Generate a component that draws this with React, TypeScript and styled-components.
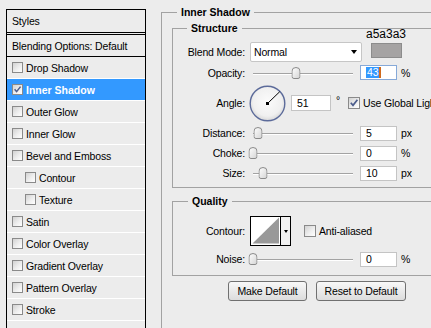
import React from 'react';
import styled, { createGlobalStyle } from 'styled-components';

const GlobalStyle = createGlobalStyle`
  html, body {
    margin: 0;
    padding: 0;
    background: #ececec;
  }
  body {
    font-family: 'Liberation Sans', Arial, sans-serif;
    font-size: 10.5px;
    letter-spacing: -0.15px;
    color: #000;
  }
`;

const Window = styled.div`
  display: flex;
  align-items: flex-start;
  width: 431px;
  height: 328px;
  overflow: hidden;
  background: #ececec;
`;

/* ---------- styles list ---------- */

const StylesPanel = styled.div`
  flex: none;
  width: 138px;
  height: 319px;
  margin: 9px 0 0 6px;
  border: 1px solid #000;
  border-bottom: none;
`;

const PanelHeader = styled.div`
  display: flex;
  align-items: center;
  height: 22px;
  padding-left: 5px;
  border-bottom: 3px double #000;
`;

const BlendingRow = styled.div`
  display: flex;
  align-items: center;
  height: 21px;
  padding-left: 5px;
  border-bottom: 1px solid #000;
  white-space: nowrap;
`;

const StyleRow = styled.div<{ $indent: number; $selected?: boolean }>`
  display: flex;
  align-items: center;
  gap: 3px;
  height: 21px;
  padding-left: ${(p) => 5 + p.$indent * 13}px;
  border-bottom: 1px solid #fff;
  white-space: nowrap;
  background: ${(p) => (p.$selected ? '#3399ff' : 'transparent')};
  color: ${(p) => (p.$selected ? '#fff' : '#000')};
  font-weight: ${(p) => (p.$selected ? 'bold' : 'normal')};
  letter-spacing: ${(p) => (p.$selected ? '0' : '-0.15px')};
`;

const Box = styled.span<{ $size: number }>`
  flex: none;
  display: inline-flex;
  align-items: center;
  justify-content: center;
  box-sizing: border-box;
  width: ${(p) => p.$size}px;
  height: ${(p) => p.$size}px;
  border: 1px solid #8a8a8a;
  background: linear-gradient(135deg, #d2d2d2 0%, #eeeeee 55%, #ffffff 100%);
`;

const CheckBox = ({ size = 11, checked = false }: { size?: number; checked?: boolean }) => (
  <Box $size={size}>
    {checked && (
      <svg width={size - 2} height={size - 2} viewBox="0 0 10 10">
        <path d="M1.8 4.8 L4 7.4 L8.4 1.8" fill="none" stroke="#4c5d8c" strokeWidth="1.7" />
      </svg>
    )}
  </Box>
);

const styleItems = [
  { label: 'Drop Shadow', indent: 0 },
  { label: 'Inner Shadow', indent: 0, checked: true, selected: true },
  { label: 'Outer Glow', indent: 0 },
  { label: 'Inner Glow', indent: 0 },
  { label: 'Bevel and Emboss', indent: 0 },
  { label: 'Contour', indent: 1 },
  { label: 'Texture', indent: 1 },
  { label: 'Satin', indent: 0 },
  { label: 'Color Overlay', indent: 0 },
  { label: 'Gradient Overlay', indent: 0 },
  { label: 'Pattern Overlay', indent: 0 },
  { label: 'Stroke', indent: 0 },
];

/* ---------- settings ---------- */

const Settings = styled.div`
  flex: none;
  width: 300px;
  margin: 5px 0 0 15px;
`;

const Group = styled.fieldset`
  margin: 0;
  padding: 0 0 40px 0;
  border: 1px solid #a2a2a2;
  min-width: 0;
`;

const SubGroup = styled.fieldset<{ $top: number; $padTop: number; $padBottom: number }>`
  margin: ${(p) => p.$top}px 0 0 10px;
  padding: ${(p) => p.$padTop}px 0 ${(p) => p.$padBottom}px 0;
  border: 1px solid #a2a2a2;
  min-width: 0;
`;

const Legend = styled.legend<{ $indent: number }>`
  margin-left: ${(p) => p.$indent}px;
  padding: 0 4px;
  font-weight: bold;
  letter-spacing: 0;
  line-height: 14px;
`;

const Row = styled.div<{ $h: number; $mt?: number }>`
  display: flex;
  align-items: center;
  height: ${(p) => p.$h}px;
  margin-top: ${(p) => p.$mt ?? 0}px;
  white-space: nowrap;
`;

const Label = styled.span`
  flex: none;
  width: 72px;
  margin-right: 5px;
  text-align: right;
`;

const Select = styled.div`
  flex: none;
  display: flex;
  align-items: center;
  justify-content: space-between;
  box-sizing: border-box;
  width: 112px;
  height: 20px;
  padding: 0 4px 0 3px;
  border: 1px solid #c6c6c6;
  border-radius: 2px;
  background: #fff;
`;

const DownArrow = styled.span<{ $w: number }>`
  width: 0;
  height: 0;
  border-left: ${(p) => p.$w / 2}px solid transparent;
  border-right: ${(p) => p.$w / 2}px solid transparent;
  border-top: ${(p) => Math.ceil(p.$w / 2)}px solid #000;
`;

const SwatchStack = styled.div`
  flex: none;
  align-self: flex-start;
  display: flex;
  flex-direction: column;
  align-items: center;
  margin: -14px 0 0 4px;
`;

const HexLabel = styled.span`
  font-size: 12px;
  letter-spacing: 0;
  line-height: 12px;
  height: 12px;
`;

const Swatch = styled.div<{ $color: string }>`
  box-sizing: border-box;
  width: 31px;
  height: 15px;
  margin-top: 3px;
  border: 1px solid #8c8c8c;
  background: ${(p) => p.$color};
`;

const SliderBox = styled.div`
  flex: none;
  position: relative;
  width: 104px;
  height: 12px;

  &::before {
    content: '';
    position: absolute;
    left: 3px;
    top: 6px;
    width: 100px;
    height: 1px;
    background: #a3a3a3;
    border-bottom: 1px solid #fff;
  }
`;

const Thumb = styled.svg`
  position: absolute;
  top: 0;
  transform: translateX(-50%);
`;

const Slider = ({ value }: { value: number }) => (
  <SliderBox>
    <Thumb width="9" height="12" viewBox="0 0 9 12" style={{ left: 3 + value }}>
      <defs>
        <linearGradient id="thumbFill" x1="0" x2="1" y1="0" y2="1">
          <stop offset="0" stopColor="#ffffff" />
          <stop offset="1" stopColor="#d4d4d4" />
        </linearGradient>
      </defs>
      <path
        d="M0.5 4 Q0.5 0.5 4.5 0.5 Q8.5 0.5 8.5 4 V9.5 Q8.5 11.5 6.5 11.5 H2.5 Q0.5 11.5 0.5 9.5 Z"
        fill="url(#thumbFill)"
        stroke="#8a8a8a"
      />
    </Thumb>
  </SliderBox>
);

const Field = styled.div<{ $w: number; $h: number; $ml: number; $focus?: boolean }>`
  flex: none;
  display: flex;
  align-items: center;
  box-sizing: border-box;
  width: ${(p) => p.$w}px;
  height: ${(p) => p.$h}px;
  margin-left: ${(p) => p.$ml}px;
  padding-left: 5px;
  border: 1px solid ${(p) => (p.$focus ? '#86a9d8' : '#c4c4c4')};
  background: #fff;
`;

const Selected = styled.span`
  background: #3399ff;
  color: #fff;
  padding: 0 1px;
  line-height: 11px;
`;

const Caret = styled.span`
  width: 2px;
  height: 11px;
  background: #d06a1c;
`;

const Unit = styled.span`
  margin-left: 4px;
`;

const Degree = styled.span`
  margin: 0 0 6px 5px;
`;

const CheckLabel = styled.span<{ $ml: number }>`
  display: flex;
  align-items: center;
  gap: 3px;
  margin-left: ${(p) => p.$ml}px;
`;

const DialSvg = styled.svg`
  flex: none;
  margin-left: -1px;
`;

const AngleDial = ({ drawn }: { drawn: number }) => {
  const rad = (drawn * Math.PI) / 180;
  const c = 18.5;
  return (
    <DialSvg width="37" height="37" viewBox="0 0 37 37">
      <defs>
        <radialGradient id="dialFill" cx="50%" cy="45%" r="55%">
          <stop offset="0%" stopColor="#fbfbfb" />
          <stop offset="75%" stopColor="#f0f0f0" />
          <stop offset="100%" stopColor="#d8d8d8" />
        </radialGradient>
      </defs>
      <circle cx={c} cy={c} r="17.3" fill="url(#dialFill)" stroke="#5c6b9a" strokeWidth="1.4" />
      <line
        x1={c}
        y1={c}
        x2={c + 17 * Math.cos(rad)}
        y2={c - 17 * Math.sin(rad)}
        stroke="#000"
        strokeWidth="1"
      />
      <rect x={c - 1.5} y={c - 1.5} width="3" height="3" fill="#000" />
    </DialSvg>
  );
};

const ContourPicker = styled.div`
  flex: none;
  display: flex;
  box-sizing: border-box;
  width: 41px;
  height: 30px;
  border: 1px solid #000;
  background: #fff;
`;

const ContourArrow = styled.div`
  flex: none;
  display: flex;
  align-items: center;
  justify-content: center;
  box-sizing: border-box;
  width: 10px;
  border-left: 1px solid #000;
  background: #f2f2f2;
`;

const ButtonRow = styled.div`
  display: flex;
  gap: 9px;
  margin: 5px 0 0 66px;
`;

const Button = styled.button<{ $w: number }>`
  box-sizing: border-box;
  width: ${(p) => p.$w}px;
  height: 20px;
  padding: 0;
  border: 1px solid #707070;
  border-radius: 3px;
  background: linear-gradient(#f8f8f8, #dcdcdc);
  font: inherit;
  letter-spacing: -0.15px;
  color: #000;
`;

export default function App() {
  return (
    <Window>
      <GlobalStyle />
      <StylesPanel>
        <PanelHeader>Styles</PanelHeader>
        <BlendingRow>Blending Options: Default</BlendingRow>
        {styleItems.map((item) => (
          <StyleRow key={item.label} $indent={item.indent} $selected={item.selected}>
            <CheckBox checked={item.checked} />
            {item.label}
          </StyleRow>
        ))}
      </StylesPanel>

      <Settings>
        <Group>
          <Legend $indent={15}>Inner Shadow</Legend>

          <SubGroup $top={2} $padTop={7} $padBottom={4}>
            <Legend $indent={14}>Structure</Legend>
            <Row $h={20}>
              <Label>Blend Mode:</Label>
              <Select>
                Normal
                <DownArrow $w={7} />
              </Select>
              <SwatchStack>
                <HexLabel>a5a3a3</HexLabel>
                <Swatch $color="#a5a3a3" />
              </SwatchStack>
            </Row>
            <Row $h={21}>
              <Label>Opacity:</Label>
              <Slider value={43} />
              <Field $w={37} $h={15} $ml={6} $focus>
                <Selected>43</Selected>
                <Caret />
              </Field>
              <Unit>%</Unit>
            </Row>
            <Row $h={40}>
              <Label>Angle:</Label>
              <AngleDial drawn={44} />
              <Field $w={40} $h={16} $ml={5}>
                51
              </Field>
              <Degree>°</Degree>
              <CheckLabel $ml={8}>
                <CheckBox size={12} checked />
                Use Global Light
              </CheckLabel>
            </Row>
            <Row $h={20}>
              <Label>Distance:</Label>
              <Slider value={5} />
              <Field $w={37} $h={15} $ml={6}>
                5
              </Field>
              <Unit>px</Unit>
            </Row>
            <Row $h={20}>
              <Label>Choke:</Label>
              <Slider value={0} />
              <Field $w={37} $h={15} $ml={6}>
                0
              </Field>
              <Unit>%</Unit>
            </Row>
            <Row $h={20}>
              <Label>Size:</Label>
              <Slider value={10} />
              <Field $w={37} $h={15} $ml={6}>
                10
              </Field>
              <Unit>px</Unit>
            </Row>
          </SubGroup>

          <SubGroup $top={6} $padTop={8} $padBottom={6}>
            <Legend $indent={15}>Quality</Legend>
            <Row $h={30}>
              <Label>Contour:</Label>
              <ContourPicker>
                <svg width="29" height="28" viewBox="0 0 29 28">
                  <polygon points="1.5,26.5 28,0.5 28,26.5" fill="#999" />
                </svg>
                <ContourArrow>
                  <DownArrow $w={5} />
                </ContourArrow>
              </ContourPicker>
              <CheckLabel $ml={13}>
                <CheckBox size={12} />
                Anti-aliased
              </CheckLabel>
            </Row>
            <Row $h={20} $mt={3}>
              <Label>Noise:</Label>
              <Slider value={0} />
              <Field $w={37} $h={15} $ml={6}>
                0
              </Field>
              <Unit>%</Unit>
            </Row>
          </SubGroup>

          <ButtonRow>
            <Button $w={79}>Make Default</Button>
            <Button $w={90}>Reset to Default</Button>
          </ButtonRow>
        </Group>
      </Settings>
    </Window>
  );
}
